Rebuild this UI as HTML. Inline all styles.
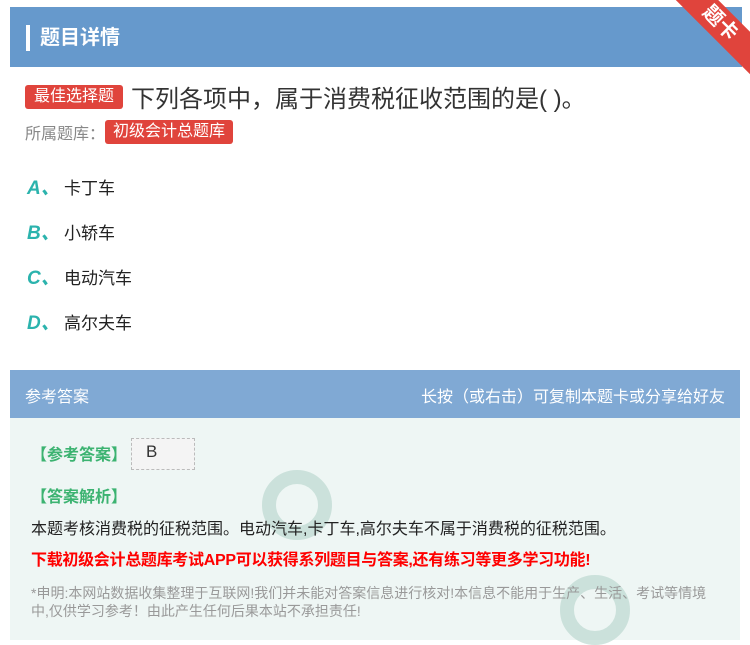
<!DOCTYPE html>
<html><head><meta charset="utf-8"><style>
*{margin:0;padding:0;box-sizing:border-box}
body{width:750px;height:640px;background:#fff;font-family:"Liberation Sans","Noto Sans CJK SC",sans-serif;position:relative;overflow:hidden}
.hd{position:absolute;left:10px;top:7px;width:732px;height:60px;background:#6699cc}
.hd .bar{position:absolute;left:16px;top:18px;width:4px;height:26px;background:#fff}
.hd .t{position:absolute;left:30px;top:14px;color:#fff;font-size:20px;font-weight:bold}
.rib{position:absolute;right:-30px;top:8px;width:120px;height:30px;background:#e0443c;transform:rotate(45deg);color:#fff;font-size:20px;text-align:center;line-height:30px;font-weight:bold}
.tag{display:inline-block;background:#e0443c;color:#fff;border-radius:3px;font-size:14px;padding:0 8px;height:24px;line-height:24px}
.q{position:absolute;left:25px;top:79px;font-size:24px;color:#333;display:flex;align-items:center}
.q .tag{margin-right:8px;font-size:16px;padding:0 9px}
.lib{position:absolute;left:25px;top:120px;font-size:16px;color:#888;display:flex;align-items:center}
.lib .tag{height:24px;line-height:24px;font-size:16px}
.opt{position:absolute;left:27px;font-size:17px;color:#222}
.opt b{color:#2bb3ad;font-style:italic;font-size:19px;display:inline-block;width:37px}
.ah{position:absolute;left:10px;top:370px;width:730px;height:48px;background:#80a9d4;color:#fff;font-size:16px}
.ah .l{position:absolute;left:15px;top:13px}
.ah .r{position:absolute;right:15px;top:13px}
.ab{position:absolute;left:10px;top:418px;width:730px;height:222px;background:#eef6f4}
.g{position:absolute;left:31px;color:#3cb371;font-weight:bold;font-size:16px}
.txt{position:absolute;left:31px;top:515px;font-size:16px;color:#222}
.red{position:absolute;left:31px;top:546px;font-size:16px;color:#f00;font-weight:bold;letter-spacing:-0.3px}
.note{position:absolute;left:31px;top:584px;width:690px;font-size:14px;color:#999;line-height:18px}
.ans{position:absolute;left:131px;top:438px;width:64px;height:32px;background:#f4f4f4;border:1px dashed #bbb;font-size:17px;color:#333;padding:3px 14px}
.wm{position:absolute;border-radius:50%;border:14px solid #bcd9d0;opacity:.7}
</style></head><body>
<div class="hd"><div class="bar"></div><div class="t">题目详情</div></div>
<div class="rib">题卡</div>
<div class="q"><span class="tag">最佳选择题</span>下列各项中，属于消费税征收范围的是( )。</div>
<div class="lib">所属题库：<span class="tag">初级会计总题库</span></div>
<div class="opt" style="top:173px"><b>A、</b>卡丁车</div>
<div class="opt" style="top:218px"><b>B、</b>小轿车</div>
<div class="opt" style="top:263px"><b>C、</b>电动汽车</div>
<div class="opt" style="top:308px"><b>D、</b>高尔夫车</div>
<div class="ah"><span class="l">参考答案</span><span class="r">长按（或右击）可复制本题卡或分享给好友</span></div>
<div class="ab"></div>
<div class="wm" style="left:262px;top:470px;width:70px;height:70px"></div>
<div class="wm" style="left:560px;top:575px;width:70px;height:70px"></div>
<div class="g" style="top:441px">【参考答案】</div>
<div class="ans">B</div>
<div class="g" style="top:483px">【答案解析】</div>
<div class="txt">本题考核消费税的征税范围。电动汽车,卡丁车,高尔夫车不属于消费税的征税范围。</div>
<div class="red">下载初级会计总题库考试APP可以获得系列题目与答案,还有练习等更多学习功能!</div>
<div class="note">*申明:本网站数据收集整理于互联网!我们并未能对答案信息进行核对!本信息不能用于生产、生活、考试等情境中,仅供学习参考！由此产生任何后果本站不承担责任!</div>
</body></html>
